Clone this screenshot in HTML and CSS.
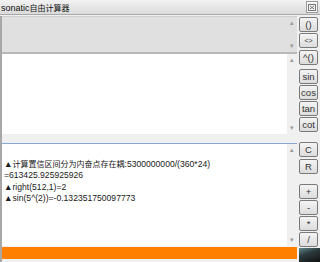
FILE: index.html
```html
<!DOCTYPE html>
<html lang="zh-CN">
  <head>
    <meta charset="UTF-8" />
    <meta name="viewport" content="width=device-width, initial-scale=1.0" />
    <title>sonatic自由计算器</title>
    <link rel="stylesheet" href="styles.css">
  </head>

  <body>
    <div class="titlebar">
      <span class="title">sonatic<span class="cjk">自由计算器</span></span>
      <span class="close">
        <svg width="8" height="7" viewBox="0 0 8 7">
          <rect x="0.5" y="0.5" width="7" height="6" fill="none" stroke="#777" />
          <path d="M2 2 L6 5 M6 2 L2 5" stroke="#777" stroke-width="1" />
        </svg>
      </span>
    </div>

    <div class="main">
      <div class="panes">
        <!-- 输入框 -->
        <div class="pane input">
          <div class="text"></div>
          <div class="scroll"><i>▴</i><i>▾</i></div>
        </div>
        <!-- 函数区 -->
        <div class="pane func">
          <div class="text"></div>
          <div class="scroll"><i>▴</i><i>▾</i></div>
        </div>
        <!-- 历史记录 -->
        <div class="pane output">
          <div class="text">
            <p>&nbsp;</p>
            <p>▲<span class="cjk">计算置信区间分为内奋点存在耦</span>:5300000000/(360*24)</p>
            <p>=613425.925925926</p>
            <p>▲right(512,1)=2</p>
            <p>▲sin(5^(2))=-0.132351750097773</p>
          </div>
          <div class="scroll"><i>▴</i><i>▾</i></div>
        </div>
        <div class="status"></div>
      </div>

      <div class="keys">
        <div class="group g1">
          <button>()</button>
          <button class="small">&lt;&gt;</button>
          <button class="pow">^()</button>
        </div>
        <div class="group g2">
          <button>sin</button>
          <button>cos</button>
          <button>tan</button>
          <button>cot</button>
        </div>
        <div class="group g3">
          <button>C</button>
          <button>R</button>
        </div>
        <div class="group g4">
          <button>+</button>
          <button>-</button>
          <button>*</button>
          <button>/</button>
        </div>
        <div class="corner"></div>
      </div>
    </div>
  </body>
</html>
```

FILE: styles.css
```css
* {
  box-sizing: border-box;
}

body {
  margin: 0;
  width: 320px;
  height: 262px;
  overflow: hidden;
  background: #f0f0f0;
  font-family: "Liberation Sans", "Noto Sans CJK SC", sans-serif;
  color: #222;
}

.titlebar {
  height: 15px;
  display: flex;
  align-items: center;
  justify-content: space-between;
  padding: 0 2px 0 1px;
  background: linear-gradient(#f3f3f3, #dadada);
  border-bottom: 1px solid #a9a9a9;
}

.title {
  font-size: 9px;
  color: #111;
}

.title .cjk {
  font-size: 8px;
}

.close {
  width: 12px;
  height: 12px;
  display: flex;
  align-items: center;
  justify-content: center;
  border: 1px solid #9a9a9a;
  background: #f6f6f6;
}

.main {
  display: flex;
  gap: 2px;
  padding-top: 1px;
}

.panes {
  width: 297px;
  display: flex;
  flex-direction: column;
  border-left: 2px solid #a7a7a7;
}

.pane {
  display: flex;
}

.pane .text {
  flex: 1;
  font-size: 8.6px;
  line-height: 11.6px;
  padding: 3px 2px;
  overflow: hidden;
  white-space: nowrap;
  color: #1a1a1a;
}

.pane .cjk {
  font-size: 8px;
}

.pane p {
  margin: 0;
}

.scroll {
  width: 10px;
  display: flex;
  flex-direction: column;
  justify-content: space-between;
  align-items: center;
  background: #f0f0f0;
  padding: 2px 0;
}

.scroll i {
  font-style: normal;
  font-size: 7px;
  line-height: 8px;
  color: #9a9a9a;
}

.input {
  height: 38px;
  background: #e0e0e0;
  border-top: 1px solid #cfcfcf;
  border-bottom: 2px solid #b9b9b9;
}

.input .scroll {
  background: #e0e0e0;
}

.func {
  height: 80px;
  background: #fff;
}

.output {
  height: 103px;
  margin-top: 9px;
  background: #fff;
  border-top: 1px solid #86a8d2;
}

.status {
  height: 12px;
  margin-top: 1px;
  background: #ff8000;
}

.keys {
  width: 19px;
  display: flex;
  flex-direction: column;
}

.group {
  display: flex;
  flex-direction: column;
  gap: 1px;
}

.g1 {
  margin-top: 1px;
}

.g1 .pow {
  margin-top: 1px;
}

.g2 {
  margin-top: 4px;
}

.g3 {
  margin-top: 10px;
  gap: 2px;
}

.g4 {
  margin-top: 10px;
}

button {
  width: 19px;
  height: 15px;
  padding: 0;
  border: 1px solid #7a7a7a;
  border-radius: 2px;
  background: linear-gradient(#f4f4f4, #dcdcdc);
  font-family: "Liberation Sans", sans-serif;
  font-size: 9.5px;
  color: #333;
  line-height: 13px;
}

button.small {
  font-size: 7px;
}

.corner {
  height: 14px;
  margin-top: 1px;
  margin-right: -2px;
  background: linear-gradient(160deg, #5e8a8c 0%, #2d3a3d 40%, #111 100%);
}
```
